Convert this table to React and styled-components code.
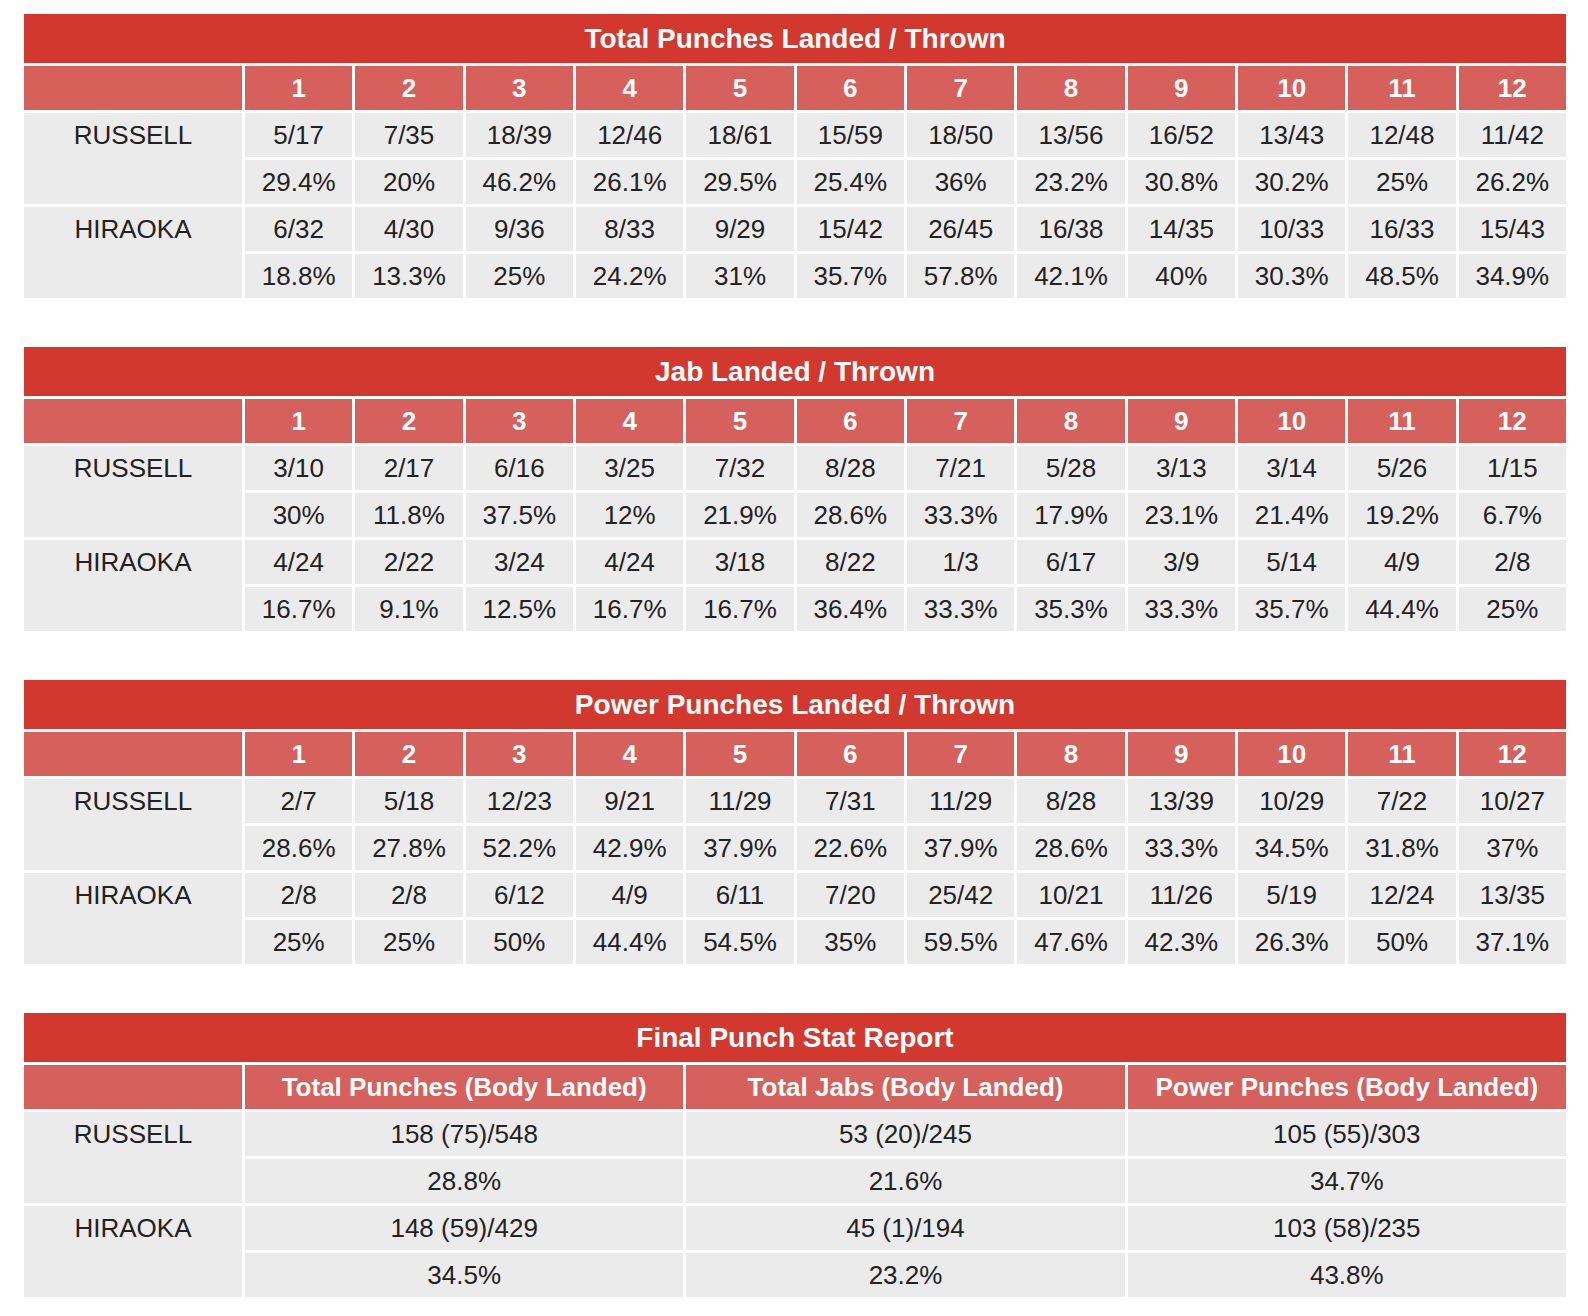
import React from 'react';
import styled, { createGlobalStyle } from 'styled-components';

const GlobalStyle = createGlobalStyle`
  body {
    margin: 0;
    background: #ffffff;
    font-family: "Liberation Sans", Arial, Helvetica, sans-serif;
  }
`;

const Page = styled.div`
  display: flex;
  flex-direction: column;
  gap: 49px;
  width: 1542px;
  padding: 14px 0 0 24px;
`;

const StatGrid = styled.div`
  display: grid;
  grid-template-columns: 218px repeat(${p => p.cols}, 1fr);
  grid-template-rows: 49px;
  grid-auto-rows: 44px;
  gap: 3px;
`;

const Title = styled.div`
  grid-column: 1 / -1;
  display: flex;
  align-items: center;
  justify-content: center;
  background: #d3382f;
  color: #ffffff;
  font-size: 28px;
  font-weight: bold;
`;

const HeadCell = styled.div`
  display: flex;
  align-items: center;
  justify-content: center;
  background: #d6605c;
  color: #ffffff;
  font-size: 26px;
  font-weight: bold;
`;

const NameCell = styled.div`
  grid-row: span 2;
  background: #ebebeb;
  color: #222222;
  font-size: 26px;
  line-height: 44px;
  text-align: center;
`;

const Cell = styled.div`
  display: flex;
  align-items: center;
  justify-content: center;
  background: #ebebeb;
  color: #222222;
  font-size: 26px;
`;

const StatTable = ({ title, columns, fighters }) => (
  <StatGrid cols={columns.length}>
    <Title>{title}</Title>
    <HeadCell />
    {columns.map((c, i) => (
      <HeadCell key={`h${i}`}>{c}</HeadCell>
    ))}
    {fighters.map(f => (
      <React.Fragment key={f.name}>
        <NameCell>{f.name}</NameCell>
        {f.stats.map((s, i) => (
          <Cell key={`${f.name}a${i}`}>{s[0]}</Cell>
        ))}
        {f.stats.map((s, i) => (
          <Cell key={`${f.name}b${i}`}>{s[1]}</Cell>
        ))}
      </React.Fragment>
    ))}
  </StatGrid>
);

const rounds = ['1', '2', '3', '4', '5', '6', '7', '8', '9', '10', '11', '12'];

// each entry is "landed/thrown|percent"
const parse = str => str.split(' ').map(p => p.split('|'));

const tables = [
  {
    title: 'Total Punches Landed / Thrown',
    columns: rounds,
    fighters: [
      {
        name: 'RUSSELL',
        stats: parse('5/17|29.4% 7/35|20% 18/39|46.2% 12/46|26.1% 18/61|29.5% 15/59|25.4% 18/50|36% 13/56|23.2% 16/52|30.8% 13/43|30.2% 12/48|25% 11/42|26.2%'),
      },
      {
        name: 'HIRAOKA',
        stats: parse('6/32|18.8% 4/30|13.3% 9/36|25% 8/33|24.2% 9/29|31% 15/42|35.7% 26/45|57.8% 16/38|42.1% 14/35|40% 10/33|30.3% 16/33|48.5% 15/43|34.9%'),
      },
    ],
  },
  {
    title: 'Jab Landed / Thrown',
    columns: rounds,
    fighters: [
      {
        name: 'RUSSELL',
        stats: parse('3/10|30% 2/17|11.8% 6/16|37.5% 3/25|12% 7/32|21.9% 8/28|28.6% 7/21|33.3% 5/28|17.9% 3/13|23.1% 3/14|21.4% 5/26|19.2% 1/15|6.7%'),
      },
      {
        name: 'HIRAOKA',
        stats: parse('4/24|16.7% 2/22|9.1% 3/24|12.5% 4/24|16.7% 3/18|16.7% 8/22|36.4% 1/3|33.3% 6/17|35.3% 3/9|33.3% 5/14|35.7% 4/9|44.4% 2/8|25%'),
      },
    ],
  },
  {
    title: 'Power Punches Landed / Thrown',
    columns: rounds,
    fighters: [
      {
        name: 'RUSSELL',
        stats: parse('2/7|28.6% 5/18|27.8% 12/23|52.2% 9/21|42.9% 11/29|37.9% 7/31|22.6% 11/29|37.9% 8/28|28.6% 13/39|33.3% 10/29|34.5% 7/22|31.8% 10/27|37%'),
      },
      {
        name: 'HIRAOKA',
        stats: parse('2/8|25% 2/8|25% 6/12|50% 4/9|44.4% 6/11|54.5% 7/20|35% 25/42|59.5% 10/21|47.6% 11/26|42.3% 5/19|26.3% 12/24|50% 13/35|37.1%'),
      },
    ],
  },
  {
    title: 'Final Punch Stat Report',
    columns: ['Total Punches (Body Landed)', 'Total Jabs (Body Landed)', 'Power Punches (Body Landed)'],
    fighters: [
      {
        name: 'RUSSELL',
        stats: [
          ['158 (75)/548', '28.8%'],
          ['53 (20)/245', '21.6%'],
          ['105 (55)/303', '34.7%'],
        ],
      },
      {
        name: 'HIRAOKA',
        stats: [
          ['148 (59)/429', '34.5%'],
          ['45 (1)/194', '23.2%'],
          ['103 (58)/235', '43.8%'],
        ],
      },
    ],
  },
];

const App = () => (
  <>
    <GlobalStyle />
    <Page>
      {tables.map(t => (
        <StatTable key={t.title} {...t} />
      ))}
    </Page>
  </>
);

export default App;
